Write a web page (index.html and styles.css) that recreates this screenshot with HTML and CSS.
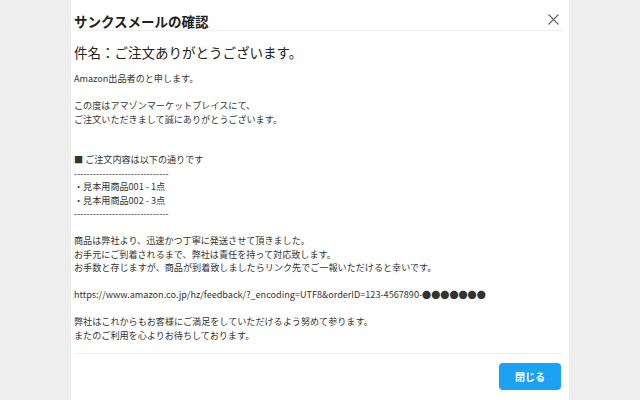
FILE: index.html
```html
<!DOCTYPE html>
<html lang="ja">
<head>
<meta charset="utf-8">
<title>サンクスメールの確認</title>
<link rel="stylesheet" href="styles.css">
</head>
<body>
<div class="modal">
  <div class="modal-header">
    <h1 class="modal-title">サンクスメールの確認</h1>
    <button class="close-btn" aria-label="閉じる">
      <svg width="11" height="11" viewBox="0 0 11 11"><path d="M0.5 0.5 L10.5 10.5 M10.5 0.5 L0.5 10.5" stroke="#666" stroke-width="1.1" fill="none"/></svg>
    </button>
  </div>
  <div class="modal-body">
    <h2 class="subject">件名：ご注文ありがとうございます。</h2>
    <div class="mail">Amazon出品者のと申します。<br>
<br>
この度はアマゾンマーケットプレイスにて、<br>
ご注文いただきまして誠にありがとうございます。<br>
<br>
<br>
■ ご注文内容は以下の通りです<br>
------------------------------<br>
・見本用商品001 - 1点<br>
・見本用商品002 - 3点<br>
------------------------------<br>
<br>
商品は弊社より、迅速かつ丁寧に発送させて頂きました。<br>
お手元にご到着されるまで、弊社は責任を持って対応致します。<br>
お手数と存じますが、商品が到着致しましたらリンク先でご一報いただけると幸いです。<br>
<br>
https://www.amazon.co.jp/hz/feedback/?_encoding=UTF8&amp;orderID=123-4567890-●●●●●●●<br>
<br>
弊社はこれからもお客様にご満足をしていただけるよう努めて参ります。<br>
またのご利用を心よりお待ちしております。</div>
  </div>
  <div class="modal-footer">
    <button class="primary-btn">閉じる</button>
  </div>
</div>
</body>
</html>
```

FILE: styles.css
```css
html, body {
  margin: 0;
  padding: 0;
  height: 100%;
}
body {
  background: #eeeeee;
  font-family: "Noto Sans CJK JP", "Noto Sans", sans-serif;
  color: #333;
}
.modal {
  width: 498px;
  height: 400px;
  margin: 0 auto;
  background: #fff;
  box-sizing: border-box;
  padding: 0 7px 0 3px;
  display: flex;
  flex-direction: column;
}
.modal-header {
  display: flex;
  justify-content: space-between;
  align-items: center;
  height: 31px;
  box-sizing: border-box;
  padding-top: 11px;
  border-bottom: 1px solid #eeeeee;
}
.modal-title {
  margin: 0;
  font-size: 13.5px;
  line-height: 20px;
  font-weight: bold;
  color: #222;
}
.close-btn {
  border: 0;
  background: none;
  padding: 0;
  margin: -3px 3px 0 0;
  width: 11px;
  height: 11px;
  display: flex;
  cursor: pointer;
}
.modal-body {
  flex: 1;
}
.subject {
  margin: 9px 0 0;
  font-size: 13.5px;
  line-height: 24px;
  font-weight: normal;
  color: #222;
}
.mail {
  margin-top: 8px;
  font-size: 9.1px;
  line-height: 13.5px;
  color: #333;
}
.modal-footer {
  border-top: 1px solid #eeeeee;
  display: flex;
  justify-content: flex-end;
  padding: 9px 1px 10px 0;
  height: 47px;
  box-sizing: border-box;
}
.primary-btn {
  width: 62px;
  height: 27px;
  border: 0;
  border-radius: 4px;
  background: #1da1f2;
  color: #fff;
  font-family: "Noto Sans CJK JP", sans-serif;
  font-size: 10px;
  font-weight: bold;
  cursor: pointer;
}
```
